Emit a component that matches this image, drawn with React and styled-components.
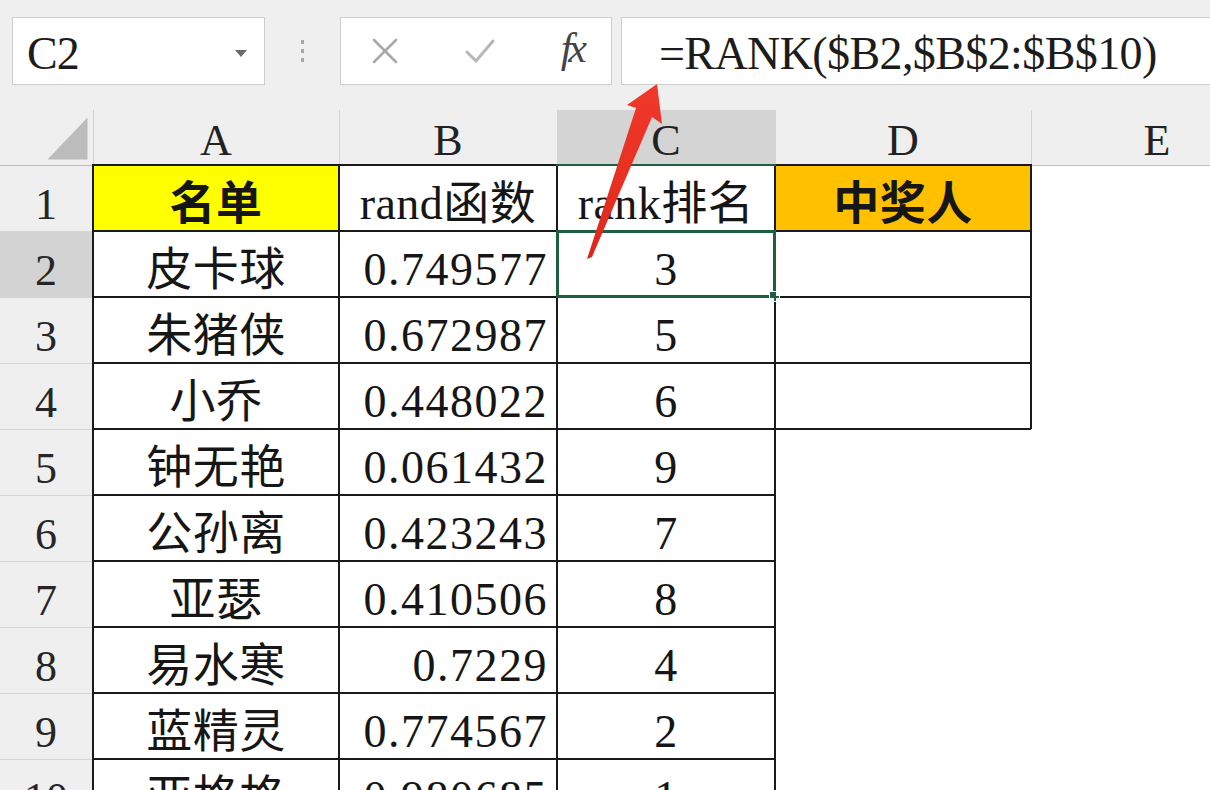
import React from "react"
import styled, { createGlobalStyle } from "styled-components"

const GlobalStyle = createGlobalStyle`
    html, body {
        margin: 0;
        padding: 0;
        background: #ffffff;
        overflow: hidden;
    }
    body {
        font-family: "Liberation Serif", "Noto Sans CJK SC", serif;
        color: #161616;
    }
`

const columns = [
    { key: 'A', width: 246 },
    { key: 'B', width: 218 },
    { key: 'C', width: 218 },
    { key: 'D', width: 256 },
    { key: 'E', width: 252 },
]

const rows = [
    { name: '皮卡球', rand: '0.749577', rank: '3' },
    { name: '朱猪侠', rand: '0.672987', rank: '5' },
    { name: '小乔', rand: '0.448022', rank: '6' },
    { name: '钟无艳', rand: '0.061432', rank: '9' },
    { name: '公孙离', rand: '0.423243', rank: '7' },
    { name: '亚瑟', rand: '0.410506', rank: '8' },
    { name: '易水寒', rand: '0.7229', rank: '4' },
    { name: '蓝精灵', rand: '0.774567', rank: '2' },
    { name: '亚格格', rand: '0.980685', rank: '1' },
]

const DropIcon = () => (
    <svg width="14" height="9" viewBox="0 0 14 9">
        <path d="M1 1 L13 1 L7 8 Z" fill="#6b6b6b" />
    </svg>
)

const CancelIcon = () => (
    <svg width="30" height="30" viewBox="0 0 30 30">
        <path d="M4 4 L26 26 M26 4 L4 26" stroke="#a9a9a9" strokeWidth="2.6" strokeLinecap="round" />
    </svg>
)

const CheckIcon = () => (
    <svg width="32" height="28" viewBox="0 0 32 28">
        <path d="M3 15 L12 24 L29 4" stroke="#b7b7b7" strokeWidth="3" fill="none" strokeLinecap="round" strokeLinejoin="round" />
    </svg>
)

const Arrow = () => (
    <ArrowLayer width="1210" height="790" viewBox="0 0 1210 790">
        <defs>
            <linearGradient id="arrowFill" x1="0" y1="1" x2="0" y2="0">
                <stop offset="0" stopColor="#e0261c" />
                <stop offset="1" stopColor="#f03a2a" />
            </linearGradient>
        </defs>
        <path
            d="M587 259 L636 108 L627 105 L657 84 L662 124 L652 117 L592 257 Z"
            fill="url(#arrowFill)"
        />
    </ArrowLayer>
)

export default function App() {
    return (
        <Page>
            <GlobalStyle />
            <Toolbar>
                <NameBox>
                    <span>C2</span>
                    <DropIcon />
                </NameBox>
                <Grip>
                    <i /><i /><i />
                </Grip>
                <FxBox>
                    <CancelIcon />
                    <CheckIcon />
                    <Fx>fx</Fx>
                </FxBox>
                <FormulaBox>=RANK($B2,$B$2:$B$10)</FormulaBox>
            </Toolbar>

            <Sheet>
                <colgroup>
                    <col style={{ width: 93 }} />
                    {columns.map((c) => (
                        <col key={c.key} style={{ width: c.width }} />
                    ))}
                </colgroup>
                <thead>
                    <tr>
                        <Corner>
                            <CornerMark />
                        </Corner>
                        {columns.map((c) => (
                            <ColHead key={c.key} $active={c.key === 'C'}>{c.key}</ColHead>
                        ))}
                    </tr>
                </thead>
                <tbody>
                    <tr>
                        <RowHead>1</RowHead>
                        <Cell $boxed $fill="#ffff00" $bold>名单</Cell>
                        <Cell $boxed>rand函数</Cell>
                        <Cell $boxed>rank排名</Cell>
                        <Cell $boxed $fill="#ffc000" $bold>中奖人</Cell>
                        <Cell />
                    </tr>
                    {rows.map((r, i) => (
                        <tr key={r.name}>
                            <RowHead $active={i === 0}>{i + 2}</RowHead>
                            <Cell $boxed>{r.name}</Cell>
                            <Cell $boxed $align="right" $num>{r.rand}</Cell>
                            <Cell $boxed>
                                {r.rank}
                                {i === 0 && (
                                    <Selection>
                                        <Handle />
                                    </Selection>
                                )}
                            </Cell>
                            <Cell $boxed={i < 3} />
                            <Cell />
                        </tr>
                    ))}
                </tbody>
            </Sheet>
            <Arrow />
        </Page>
    )
}

const Page = styled.div`
    position: relative;
    width: 1210px;
    height: 790px;
    overflow: hidden;
    background: #ffffff;
`

const Toolbar = styled.div`
    height: 110px;
    box-sizing: border-box;
    background: #efefef;
    display: flex;
    align-items: flex-start;
    padding: 17px 0 0 12px;
`

const Box = styled.div`
    box-sizing: border-box;
    height: 68px;
    background: #ffffff;
    border: 1px solid #cdcdcd;
    display: flex;
    align-items: center;
`

const NameBox = styled(Box)`
    width: 253px;
    justify-content: space-between;
    padding: 4px 16px 0 14px;
    font-size: 46px;
    color: #1c1c1c;
    letter-spacing: -1px;
`

const Grip = styled.div`
    width: 75px;
    height: 68px;
    display: flex;
    flex-direction: column;
    align-items: center;
    justify-content: center;
    gap: 5px;
    & i {
        display: block;
        width: 3px;
        height: 4px;
        background: #a8a8a8;
    }
`

const FxBox = styled(Box)`
    width: 272px;
    justify-content: space-between;
    padding: 0 28px 0 29px;
`

const Fx = styled.span`
    font-family: "Liberation Serif", serif;
    font-style: italic;
    font-size: 42px;
    color: #444;
    letter-spacing: -4px;
    padding-bottom: 6px;
`

const FormulaBox = styled(Box)`
    margin-left: 9px;
    flex: 1;
    border-right: none;
    padding: 4px 0 0 37px;
    font-size: 46px;
    letter-spacing: -0.6px;
    color: #1c1c1c;
    white-space: nowrap;
`

const Sheet = styled.table`
    table-layout: fixed;
    border-collapse: collapse;
    width: 1283px;
    font-family: "Liberation Serif", "Noto Sans CJK SC", serif;
    line-height: 1;
`

const Corner = styled.th`
    box-sizing: border-box;
    height: 55px;
    padding: 0;
    background: #efefef;
    border-right: 1px solid #d0d0d0;
    border-bottom: 1px solid #bdbdbd;
    vertical-align: bottom;
`

const CornerMark = styled.div`
    width: 40px;
    height: 42px;
    margin: 0 5px 5px auto;
    background: #bcbcbc;
    clip-path: polygon(100% 0, 100% 100%, 0 100%);
`

const ColHead = styled.th`
    box-sizing: border-box;
    height: 55px;
    padding: 8px 0 0;
    font-weight: normal;
    font-size: 44px;
    color: #222;
    text-align: center;
    background: ${(p) => (p.$active ? '#d4d4d4' : '#efefef')};
    border-right: 1px solid #d3d3d3;
    border-bottom: ${(p) => (p.$active ? '2px solid #1f5e3e' : '1px solid #bdbdbd')};
`

const RowHead = styled.th`
    box-sizing: border-box;
    height: 66px;
    padding: 14px 0 0;
    font-weight: normal;
    font-size: 44px;
    color: #262626;
    text-align: center;
    background: ${(p) => (p.$active ? '#d3d3d3' : '#efefef')};
    border-bottom: 1px solid #d6d6d6;
    border-right: 1px solid #c4c4c4;
`

const Cell = styled.td`
    box-sizing: border-box;
    position: relative;
    height: 66px;
    padding: 12px 8px 0;
    white-space: nowrap;
    overflow: visible;
    font-size: 46px;
    font-weight: ${(p) => (p.$bold ? 700 : 400)};
    text-align: ${(p) => p.$align || 'center'};
    background: ${(p) => p.$fill || '#ffffff'};
    border: ${(p) => (p.$boxed ? '2px solid #1a1a1a' : 'none')};
    letter-spacing: ${(p) => (p.$num ? '1.5px' : '0.5px')};
`

const Selection = styled.div`
    position: absolute;
    inset: -2px;
    border: 3px solid #1e5f3f;
    pointer-events: none;
`

const Handle = styled.div`
    position: absolute;
    right: -7px;
    bottom: -7px;
    width: 9px;
    height: 9px;
    background: #1e5f3f;
    border: 1px solid #ffffff;
`

const ArrowLayer = styled.svg`
    position: absolute;
    top: 0;
    left: 0;
    pointer-events: none;
`
